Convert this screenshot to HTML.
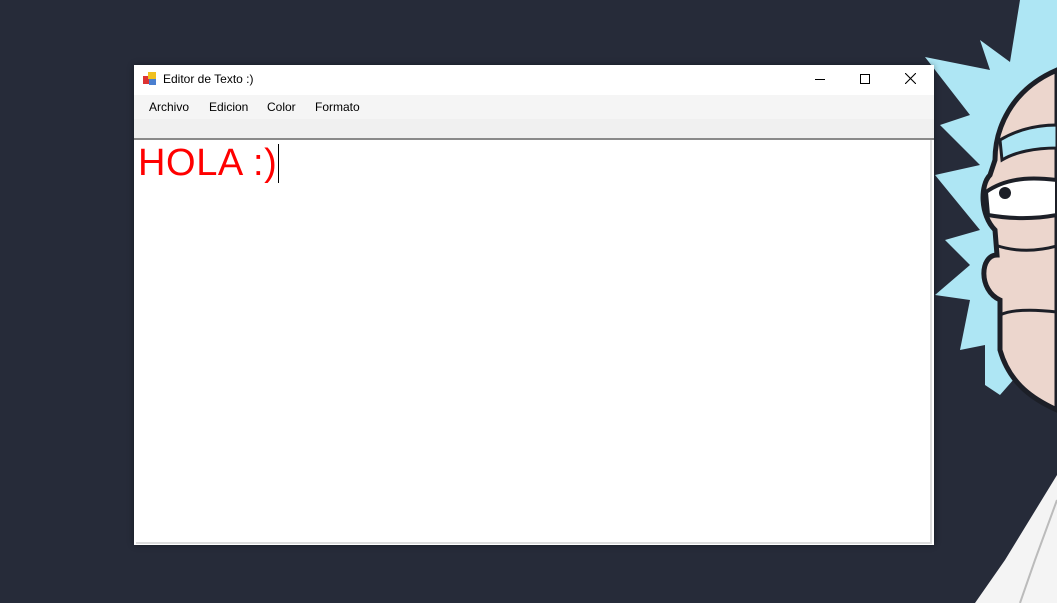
<!DOCTYPE html>
<html><head><style>
body{margin:0;width:1057px;height:603px;background:#262b39;position:relative;overflow:hidden;font-family:"Segoe UI","Liberation Sans",sans-serif;}
.win{position:absolute;left:134px;top:65px;width:800px;height:480px;background:#fff;box-shadow:0 0 6px rgba(0,0,0,.4);}
.title{position:absolute;left:0;top:0;width:800px;height:30px;background:#fff;font-size:12px;color:#000;}
.menu{position:absolute;left:0;top:30px;width:800px;height:24px;background:#f5f5f5;font-size:12px;}
.menu span{position:absolute;top:5px;}
.strip{position:absolute;left:0;top:54px;width:800px;height:19px;background:#f0f0f0;border-bottom:2px solid #8a8a8a;}
.edit{position:absolute;left:2px;top:75px;width:794px;height:402px;background:#fff;border-right:2px solid #ddd;border-bottom:2px solid #ddd;}
.txt{position:absolute;left:2px;top:1px;font-family:"Liberation Sans",Arial,sans-serif;font-size:38px;letter-spacing:0.6px;color:#ff0000;line-height:44px;}
.caret{position:absolute;left:142px;top:4px;width:1px;height:39px;background:#000;}
</style></head><body>
<svg style="position:absolute;left:900px;top:0" width="157" height="603" viewBox="0 0 157 603">
<path d="M25,57 L90,70 L80,40 L110,62 L120,0 L157,0 L157,330 L100,395 L85,385 L85,345 L60,350 L70,300 L35,295 L70,265 L45,240 L80,230 L35,175 L80,165 L40,125 L70,115 Z" fill="#aee6f4"/>
<path d="M157,70 C110,90 95,130 95,160 L90,175 C80,185 80,215 95,230 L97,255 C80,255 78,290 100,300 L100,350 C110,385 135,400 157,410 Z" fill="#ecd6cd" stroke="#1c1f27" stroke-width="5"/>
<path d="M100,140 C120,128 140,125 157,125 L157,148 C135,148 115,152 102,160 Z" fill="#aee6f4" stroke="#1c1f27" stroke-width="3"/>
<path d="M86,192 C110,175 140,178 157,180 L157,215 C130,220 105,218 88,215 Z" fill="#fff" stroke="#1c1f27" stroke-width="4"/>
<circle cx="105" cy="193" r="6" fill="#1c1f27"/>
<path d="M95,245 C115,252 135,252 157,246" stroke="#1c1f27" stroke-width="3" fill="none"/>
<path d="M100,315 C115,308 140,310 157,312" stroke="#1c1f27" stroke-width="3" fill="none"/>
<path d="M157,475 L105,560 L75,603 L157,603 Z" fill="#f4f4f4"/>
<path d="M157,500 L135,560 L120,603" stroke="#bbb" stroke-width="2" fill="none"/>
</svg>
<div class="win">
<div class="title">
<svg style="position:absolute;left:9px;top:7px" width="14" height="14"><rect x="0" y="4" width="6" height="8" fill="#d33"/><rect x="5" y="0" width="8" height="7" fill="#f0c020"/><rect x="6" y="7" width="7" height="6" fill="#4a7fd0"/></svg>
<span style="position:absolute;left:29px;top:7px">Editor de Texto :)</span>
<div style="position:absolute;left:681px;top:14px;width:10px;height:1px;background:#000"></div>
<div style="position:absolute;left:726px;top:9px;width:8px;height:8px;border:1px solid #000"></div>
<svg style="position:absolute;left:771px;top:8px" width="11" height="11"><path d="M0,0L11,11M11,0L0,11" stroke="#000" stroke-width="1.1"/></svg>
</div>
<div class="menu"><span style="left:15px">Archivo</span><span style="left:75px">Edicion</span><span style="left:133px">Color</span><span style="left:181px">Formato</span></div>
<div class="strip"></div>
<div class="edit"><div class="txt">HOLA :)</div><div class="caret"></div></div>
</div>
</body></html>
